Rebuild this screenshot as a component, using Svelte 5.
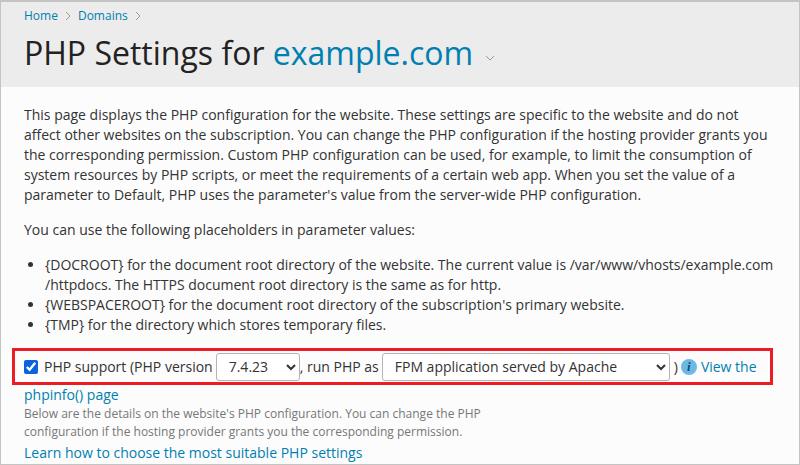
<div class="frame">
  <header class="page-head">
    <nav class="crumbs">
      <a href="#home">Home</a>
      <svg class="sep" width="6" height="10" viewBox="0 0 6 10"><path d="M1 1l4 4-4 4" /></svg>
      <a href="#domains">Domains</a>
      <svg class="sep" width="6" height="10" viewBox="0 0 6 10"><path d="M1 1l4 4-4 4" /></svg>
    </nav>
    <h1>
      PHP Settings for <a href="#site">example.com</a>
      <svg class="caret" width="10" height="6" viewBox="0 0 10 6"><path d="M1 1l4 4 4-4" /></svg>
    </h1>
  </header>

  <main class="content">
    <p class="intro">
      This page displays the PHP configuration for the website. These settings are specific to the website and do not<br />
      affect other websites on the subscription. You can change the PHP configuration if the hosting provider grants you<br />
      the corresponding permission. Custom PHP configuration can be used, for example, to limit the consumption of<br />
      system resources by PHP scripts, or meet the requirements of a certain web app. When you set the value of a<br />
      parameter to Default, PHP uses the parameter's value from the server-wide PHP configuration.
    </p>
    <p class="intro">You can use the following placeholders in parameter values:</p>
    <ul>
      <li>
        {"{DOCROOT}"} for the document root directory of the website. The current value is /var/www/vhosts/example.com<br />
        /httpdocs. The HTTPS document root directory is the same as for http.
      </li>
      <li>{"{WEBSPACEROOT}"} for the document root directory of the subscription's primary website.</li>
      <li>{"{TMP}"} for the directory which stores temporary files.</li>
    </ul>

    <div class="support">
      <div class="highlight"></div>
      <label class="check">
        <input type="checkbox" checked />
        <span>PHP support (PHP version</span>
      </label>
      <select class="version">
        <option>7.4.23</option>
      </select>
      <span class="after-version">, run PHP as</span>
      <select class="handler">
        <option>FPM application served by Apache</option>
      </select>
      <span class="paren">)</span>
      <span class="info">i</span>
      <a href="#phpinfo">View the</a>
    </div>
    <a class="phpinfo" href="#phpinfo">phpinfo() page</a>
    <p class="hint">
      Below are the details on the website's PHP configuration. You can change the PHP<br />
      configuration if the hosting provider grants you the corresponding permission.
    </p>
    <a class="learn" href="#learn">Learn how to choose the most suitable PHP settings</a>
  </main>
</div>

<style>
  :global(body) {
    margin: 0;
    background: #fff;
  }

  .frame {
    width: 800px;
    height: 465px;
    box-sizing: border-box;
    border: 1px solid #c4c4c4;
    border-top-width: 2px;
    background: #fcfcfc;
    overflow: hidden;
    font-family: "Open Sans", sans-serif;
    font-size: 14px;
    line-height: 20px;
    color: #333;
  }

  a {
    color: #007fb1;
    text-decoration: none;
  }

  .page-head {
    height: 85px;
    box-sizing: border-box;
    padding: 5px 23px 0;
    background: #ececec;
  }

  .crumbs {
    display: flex;
    align-items: center;
    gap: 7px;
    height: 18px;
    font-size: 12px;
  }

  .sep path,
  .caret path {
    fill: none;
    stroke: #9a9a9a;
    stroke-width: 1;
  }

  h1 {
    margin: 6px 0 0;
    font-size: 32px;
    line-height: 44px;
    font-weight: 400;
    color: #222;
  }

  .caret {
    margin-left: 4px;
    vertical-align: 4px;
  }

  .content {
    padding: 18px 23px 0;
  }

  .intro {
    margin: 0 0 15px;
    white-space: nowrap;
  }

  ul {
    margin: 0;
    padding: 0 0 0 21px;
    white-space: nowrap;
  }

  .support {
    position: relative;
    display: flex;
    align-items: center;
    height: 37px;
    margin-top: 13px;
    white-space: nowrap;
  }

  .highlight {
    position: absolute;
    left: -12px;
    top: 0;
    width: 761px;
    height: 37px;
    box-sizing: border-box;
    border: 3px solid #ed1c24;
  }

  .check {
    display: flex;
    align-items: center;
    gap: 6px;
  }

  .check input {
    width: 14px;
    height: 14px;
    margin: 0;
    accent-color: #0b62de;
  }

  select {
    height: 28px;
    margin: 0;
    padding: 0 4px 0 8px;
    font: inherit;
    color: #333;
    background: #fff;
    border: 1px solid #b5b5b5;
    border-radius: 3px;
  }

  .version {
    width: 84px;
    margin-left: 3px;
  }

  .after-version {
    margin-right: 3px;
  }

  .handler {
    width: 288px;
  }

  .paren {
    margin-left: 4px;
  }

  .info {
    width: 16px;
    height: 16px;
    margin: 0 4px 0 3px;
    border-radius: 50%;
    background: #6cb9e6;
    color: #134a6b;
    font: italic 700 13px/16px "Liberation Serif", serif;
    text-align: center;
  }

  .phpinfo {
    display: block;
  }

  .hint {
    margin: 0;
    font-size: 12px;
    line-height: 18px;
    color: #777;
    white-space: nowrap;
  }

  .learn {
    display: block;
    margin-top: 2px;
  }
</style>
